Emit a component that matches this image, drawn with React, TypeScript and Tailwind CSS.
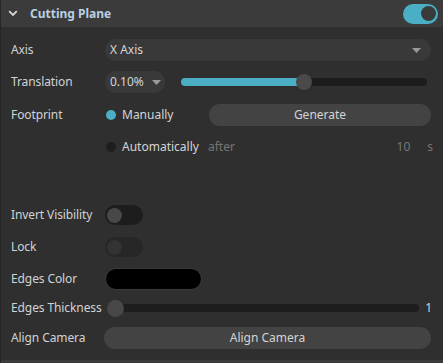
import React from "react";

const Label = ({ children }: { children: React.ReactNode }) => (
  <div className="w-[94px] shrink-0 text-[12px] text-[#cfd3d6] tracking-[-0.1px]">{children}</div>
);

const Caret = () => (
  <svg width="9" height="5" viewBox="0 0 9 5" className="shrink-0">
    <path d="M0 0 L9 0 L4.5 5 Z" fill="#9a9a9a" />
  </svg>
);

export default function App() {
  return (
    <div
      className="w-[443px] h-[363px] bg-[#2f2f2f] flex flex-col overflow-hidden border-l border-[#262626]"
      style={{ fontFamily: '"Noto Sans", "Open Sans", sans-serif' }}
    >
      {/* Header */}
      <div className="h-[27px] shrink-0 bg-[#3b3b3b] flex items-center pl-[7px] pr-[5px]">
        <svg width="10" height="7" viewBox="0 0 10 7" className="mr-[12px]">
          <path d="M1.2 1.2 L5 5 L8.8 1.2" stroke="#d8d8d8" strokeWidth="1.8" fill="none" />
        </svg>
        <div className="text-[12px] font-bold text-[#b9cfe2] flex-1">Cutting Plane</div>
        <div className="w-[35px] h-[20px] rounded-full bg-[#4aafc5] flex items-center justify-end pr-[2px]">
          <div className="w-[15px] h-[15px] rounded-full bg-[#3a3a3a]" />
        </div>
      </div>

      <div className="flex flex-col pl-[10px] pr-[12px] pt-[7px]">
        {/* Axis */}
        <div className="h-[32px] flex items-center">
          <Label>Axis</Label>
          <div className="flex-1 h-[22px] rounded-full bg-[#393939] flex items-center pl-[5px] pr-[10px]">
            <span className="flex-1 text-[12px] text-[#d4d4d4]">X Axis</span>
            <Caret />
          </div>
        </div>

        {/* Translation */}
        <div className="h-[32px] flex items-center">
          <Label>Translation</Label>
          <div className="w-[60px] h-[22px] rounded-full bg-[#393939] flex items-center pl-[5px] pr-[10px] gap-[8px]">
            <span className="text-[12px] text-[#d4d4d4]">0.10%</span>
            <Caret />
          </div>
          <div className="flex-1 ml-[16px] mr-[4px] relative h-[16px] flex items-center">
            <div className="w-full h-[8px] rounded-full bg-[#1d1d1d]" />
            <div className="absolute left-0 top-[4px] h-[8px] w-[125px] rounded-l-full bg-[#4aafc5]" />
            <div className="absolute left-[115px] top-0 w-[16px] h-[16px] rounded-full bg-[#4a4a4a]" />
          </div>
        </div>

        {/* Footprint */}
        <div className="h-[33px] flex items-center">
          <Label>Footprint</Label>
          <div className="w-[10px] h-[10px] rounded-full bg-[#4aafc5] ml-[1px] mr-[6px]" />
          <span className="w-[87px] text-[12px] text-[#d4d4d4]">Manually</span>
          <div className="flex-1 h-[22px] rounded-full bg-[#434343] flex items-center justify-center text-[12px] text-[#d4d4d4]">
            Generate
          </div>
        </div>

        {/* Automatically */}
        <div className="h-[32px] flex items-center">
          <div className="w-[94px] shrink-0" />
          <div className="w-[10px] h-[10px] rounded-full bg-[#1e1e1e] ml-[1px] mr-[6px]" />
          <span className="w-[86px] text-[12px] text-[#d4d4d4]">Automatically</span>
          <span className="flex-1 text-[12px] text-[#767676]">after</span>
          <span className="text-[12px] text-[#767676] mr-[17px]">10</span>
          <span className="text-[12px] text-[#767676] mr-[-2px]">s</span>
        </div>

        <div className="h-[36px]" />

        {/* Invert Visibility */}
        <div className="h-[32px] flex items-center">
          <Label>Invert Visibility</Label>
          <div className="w-[38px] h-[20px] rounded-full bg-[#1d1d1d] flex items-center pl-[2px]">
            <div className="w-[15px] h-[15px] rounded-full bg-[#484848]" />
          </div>
        </div>

        {/* Lock */}
        <div className="h-[32px] flex items-center">
          <Label>Lock</Label>
          <div className="w-[38px] h-[20px] rounded-full bg-[#272727] flex items-center pl-[2px]">
            <div className="w-[15px] h-[15px] rounded-full bg-[#333333]" />
          </div>
        </div>

        {/* Edges Color */}
        <div className="h-[32px] flex items-center">
          <Label>Edges Color</Label>
          <div className="w-[97px] h-[22px] rounded-full bg-black border border-[#3a3a3a]" />
        </div>

        {/* Edges Thickness */}
        <div className="h-[26px] flex items-center">
          <Label>Edges Thickness</Label>
          <div className="flex-1 relative h-[16px] flex items-center ml-[2px] mr-[6px]">
            <div className="w-full h-[8px] rounded-full bg-[#1d1d1d]" />
            <div className="absolute left-0 top-0 w-[17px] h-[17px] rounded-full bg-[#484848]" />
          </div>
          <span className="text-[12px] text-[#d4d4d4] mr-[-1px]">1</span>
        </div>

        {/* Align Camera */}
        <div className="h-[34px] flex items-center">
          <Label>Align Camera</Label>
          <div className="flex-1 h-[22px] rounded-full bg-[#434343] flex items-center justify-center text-[12px] text-[#d4d4d4] ml-[-1px]">
            Align Camera
          </div>
        </div>
      </div>
      <div className="flex-1" />
      <div className="h-[3px] bg-[#3b3b3b] shrink-0" />
    </div>
  );
}
